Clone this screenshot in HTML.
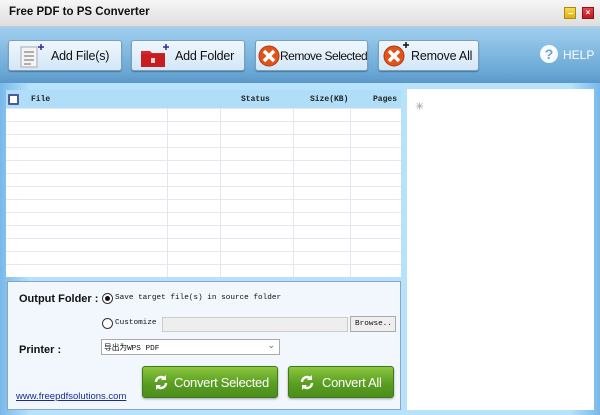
<!DOCTYPE html>
<html><head><meta charset="utf-8"><style>
*{margin:0;padding:0;box-sizing:border-box}
body{width:600px;height:415px;overflow:hidden;font-family:"Liberation Sans","Noto Sans CJK SC",sans-serif;background:#9ccff2;position:relative}
.abs{position:absolute;white-space:nowrap}
#title{left:0;top:0;width:600px;height:27px;background:linear-gradient(#f6f6f6,#dedede);border-bottom:1px solid #c8c8c8}
#title span{position:absolute;left:9px;top:6px;font-weight:bold;font-size:11.5px;color:#111}
#tool{left:0;top:27px;width:600px;height:56px;background:linear-gradient(#a0cfee,#6aa8d6 80%,#5b98c8)}
.btn{position:absolute;top:13px;height:31px;border:1px solid #7d9fbc;border-radius:3px;background:linear-gradient(#f0f7fd,#d3e7f7);font-size:12.5px;letter-spacing:-0.2px;color:#111;box-shadow:0 1px 1px rgba(0,0,0,.3);white-space:nowrap}
.btn span{position:absolute;top:8px}
#body{left:0;top:83px;width:600px;height:332px;background:linear-gradient(90deg,#78b8ea,#b6e2fb 5%,#b6e2fb 95%,#78b8ea)}
#thead{left:6px;top:90px;width:395px;height:18px;background:#b0def9;font-family:"Liberation Mono",monospace;font-size:8px;font-weight:bold;color:#222}
#thead span{position:absolute;top:5px}
#grid{left:6px;top:108px;width:395px;height:169px;background:#fff;
background-image:linear-gradient(#e6e8f0 1px,transparent 1px);background-size:100% 13px}
.vl{position:absolute;top:0;width:1px;height:169px;background:#e4e6ef}
#right{left:407px;top:89px;width:187px;height:321px;background:#fff}
#bottom{left:7px;top:281px;width:394px;height:129px;background:#f1f7fc;border:1px solid #8aa5bd}
.lbl{position:absolute;font-weight:bold;font-size:11px;color:#111;white-space:nowrap}
.mono{position:absolute;font-family:"Liberation Mono","Noto Sans CJK SC",monospace;font-size:7.7px;color:#111;white-space:nowrap}
.radio{position:absolute;width:11px;height:11px;border:1px solid #333;border-radius:50%;background:#fff}
.gbtn{position:absolute;top:84px;height:32px;border:1px solid #3e7a1e;border-radius:3px;background:linear-gradient(#8cc63f,#5a9e22 55%,#4c8e1a);color:#fff;font-size:13px;letter-spacing:-0.3px;box-shadow:0 1px 2px rgba(0,0,0,.35);white-space:nowrap}
.gbtn span{position:absolute;top:8px}
</style></head><body>
<div id="title" class="abs"><span>Free PDF to PS Converter</span>
<div class="abs" style="left:564px;top:7px;width:12px;height:12px;background:linear-gradient(#f8dc4a,#e0b012);border:1px solid #b08a10"><div class="abs" style="left:3px;top:5px;width:5px;height:1px;background:#fff"></div></div>
<div class="abs" style="left:582px;top:7px;width:12px;height:12px;background:linear-gradient(#e8474a,#c01820);border:1px solid #901018;color:#fff;font-size:8px;line-height:10px;text-align:center;font-weight:bold">×</div>
</div>
<div id="tool" class="abs">
<div class="btn" style="left:8px;width:114px">
<svg class="abs" style="left:10px;top:3px" width="26" height="25"><rect x="2" y="3" width="16" height="20" fill="#f4f4f4" stroke="#aaa"/><g stroke="#999" stroke-width="1.5"><line x1="5" y1="8" x2="15" y2="8"/><line x1="5" y1="12" x2="15" y2="12"/><line x1="5" y1="16" x2="15" y2="16"/><line x1="5" y1="20" x2="12" y2="20"/></g><path d="M22 0v6M19 3h6" stroke="#2d2d9c" stroke-width="1.5"/></svg>
<span style="left:42px">Add File(s)</span></div>
<div class="btn" style="left:131px;width:114px">
<svg class="abs" style="left:8px;top:3px" width="30" height="25"><path d="M1 7h9l2 2h13v14H1z" fill="#d8262a"/><rect x="1" y="10" width="24" height="13" fill="#c81c20"/><rect x="11" y="14" width="4" height="5" fill="#fff" opacity=".8"/><path d="M26 0v6M23 3h6" stroke="#2d2d9c" stroke-width="1.5"/></svg>
<span style="left:43px">Add Folder</span></div>
<div class="btn" style="left:255px;width:113px">
<svg class="abs" style="left:2px;top:4px" width="22" height="22"><circle cx="11" cy="11" r="10" fill="#e0541a" stroke="#b03a10"/><path d="M6 6l10 10M16 6L6 16" stroke="#fff" stroke-width="3.5"/></svg>
<span style="left:24px;font-size:12px;letter-spacing:-0.5px">Remove Selected</span></div>
<div class="btn" style="left:378px;width:101px">
<svg class="abs" style="left:4px;top:1px" width="28" height="26"><circle cx="11" cy="14" r="10" fill="#e0541a" stroke="#b03a10"/><path d="M6 9l10 10M16 9L6 19" stroke="#fff" stroke-width="3.5"/><path d="M23 0v6M20 3h6" stroke="#111" stroke-width="1.5"/></svg>
<span style="left:32px">Remove All</span></div>
<svg class="abs" style="left:539px;top:17px" width="20" height="20"><circle cx="10" cy="10" r="9" fill="#fff" opacity=".95"/><text x="10" y="15" text-anchor="middle" font-size="14" font-weight="bold" fill="#6ea3cd" font-family="Liberation Sans">?</text></svg>
<div class="abs" style="left:563px;top:21px;color:#fff;font-size:12px">HELP</div>
</div>
<div id="body" class="abs"></div>
<div id="thead" class="abs">
<div class="abs" style="left:2px;top:4px;width:11px;height:11px;border:2px solid #4a5a9a;background:#fff;border-radius:1px"></div>
<span style="left:25px">File</span><span style="left:235px">Status</span><span style="left:304px">Size(KB)</span><span style="left:367px">Pages</span></div>
<div id="grid" class="abs"><div class="vl" style="left:161px"></div><div class="vl" style="left:214px"></div><div class="vl" style="left:287px"></div><div class="vl" style="left:344px"></div></div>
<div id="right" class="abs"><div class="abs" style="left:8px;top:11px;color:#999;font-size:11px">✳</div></div>
<div id="bottom" class="abs">
<div class="lbl" style="left:11px;top:11px">Output Folder :</div>
<div class="radio" style="left:94px;top:11px"><div class="abs" style="left:2px;top:2px;width:5px;height:5px;border-radius:50%;background:#111"></div></div>
<div class="mono" style="left:107px;top:12px">Save target file(s) in source folder</div>
<div class="radio" style="left:94px;top:36px"></div>
<div class="mono" style="left:107px;top:37px">Customize</div>
<div class="abs" style="left:154px;top:35px;width:186px;height:15px;background:#eee;border:1px solid #ccc"></div>
<div class="abs" style="left:342px;top:34px;width:46px;height:16px;background:#eee;border:1px solid #aaa"><div class="mono" style="left:4px;top:3px">Browse..</div></div>
<div class="lbl" style="left:11px;top:62px">Printer :</div>
<div class="abs" style="left:93px;top:57px;width:179px;height:16px;background:#fff;border:1px solid #aaa"><div class="mono" style="left:2px;top:2px">导出为WPS PDF</div><div class="abs" style="right:4px;top:0px;font-size:9px;color:#666">⌄</div></div>
<div class="gbtn" style="left:134px;width:136px"><svg class="abs" style="left:10px;top:7px" width="16" height="17"><path d="M3 8a5 5 0 0 1 9-3" stroke="#fff" stroke-width="2.5" fill="none"/><path d="M13 1v5H8z" fill="#fff"/><path d="M13 9a5 5 0 0 1-9 3" stroke="#fff" stroke-width="2.5" fill="none"/><path d="M3 16v-5h5z" fill="#fff"/></svg><span style="left:31px">Convert Selected</span></div>
<div class="gbtn" style="left:280px;width:106px"><svg class="abs" style="left:10px;top:7px" width="16" height="17"><path d="M3 8a5 5 0 0 1 9-3" stroke="#fff" stroke-width="2.5" fill="none"/><path d="M13 1v5H8z" fill="#fff"/><path d="M13 9a5 5 0 0 1-9 3" stroke="#fff" stroke-width="2.5" fill="none"/><path d="M3 16v-5h5z" fill="#fff"/></svg><span style="left:33px">Convert All</span></div>
<div class="abs" style="left:8px;top:109px;font-size:9.5px;color:#1a2a9a;text-decoration:underline">www.freepdfsolutions.com</div>
</div>
</body></html>
